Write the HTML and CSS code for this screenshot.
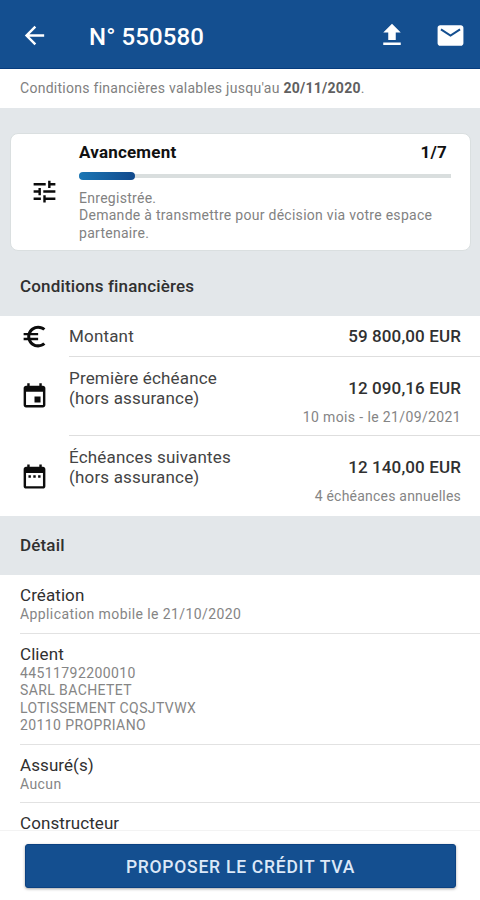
FILE: index.html
```html
<!DOCTYPE html>
<html lang="fr">
<head>
    <meta charset="UTF-8">
    <meta name="viewport" content="width=device-width, initial-scale=1.0">
    <title>N° 550580</title>
    <link rel="stylesheet" href="styles.css">
</head>
<body>
    <header class="app-bar">
        <svg class="icon icon-back" viewBox="0 0 24 24"><path d="M20 11H7.83l5.59-5.59L12 4l-8 8 8 8 1.41-1.41L7.83 13H20v-2z"/></svg>
        <h1 class="app-title">N° 550580</h1>
        <svg class="icon icon-upload" viewBox="0 0 24 24"><path d="M5 20h14v-2H5v2zm4-4h6v-6h4l-7-7-7 7h4v6z"/></svg>
        <svg class="icon icon-mail" viewBox="0 0 24 24"><path d="M20 4H4c-1.1 0-1.99.9-1.99 2L2 18c0 1.1.9 2 2 2h16c1.1 0 2-.9 2-2V6c0-1.1-.9-2-2-2z"/><path class="mail-flap" d="M4.6 7.3L12 12l7.4-4.7"/></svg>
    </header>

    <main class="content">
        <p class="notice">Conditions financières valables jusqu'au <strong>20/11/2020</strong>.</p>

        <section class="card">
            <svg class="icon" viewBox="0 0 24 24"><path d="M3 17v2h6v-2H3zM3 5v2h10V5H3zm10 16v-2h8v-2h-8v-2h-2v6h2zM7 9v2H3v2h4v2h2V9H7zm14 4v-2H11v2h10zm-6-4h2V7h4V5h-4V3h-2v6z"/></svg>
            <div class="card-body">
                <div class="card-head">
                    <span>Avancement</span>
                    <span class="card-step">1/7</span>
                </div>
                <div class="progress"><div class="progress-bar"></div></div>
                <p class="card-text">Enregistrée.<br>Demande à transmettre pour décision via votre espace partenaire.</p>
            </div>
        </section>

        <h2 class="section-title">Conditions financières</h2>
        <ul class="finance">
            <li class="finance-row row-amount">
                <svg class="icon" viewBox="0 0 24 24"><path d="M15 18.5c-2.51 0-4.68-1.42-5.76-3.5H15v-2H8.58c-.05-.33-.08-.66-.08-1s.03-.67.08-1H15V9H9.24C10.32 6.92 12.5 5.5 15 5.5c1.61 0 3.09.59 4.23 1.57L21 5.3C19.41 3.87 17.3 3 15 3c-3.92 0-7.24 2.51-8.48 6H3v2h3.06c-.04.33-.06.66-.06 1s.02.67.06 1H3v2h3.52c1.24 3.49 4.56 6 8.48 6 2.31 0 4.41-.87 6-2.3l-1.78-1.77c-1.13.98-2.6 1.57-4.22 1.57z"/></svg>
                <div class="finance-body">
                    <div class="finance-label">Montant</div>
                    <div class="finance-value">59 800,00 EUR</div>
                </div>
            </li>
            <li class="finance-row">
                <svg class="icon" viewBox="0 0 24 24"><path d="M17 12h-5v5h5v-5zM16 1v2H8V1H6v2H5c-1.11 0-1.99.9-1.99 2L3 19c0 1.1.89 2 2 2h14c1.1 0 2-.9 2-2V5c0-1.1-.9-2-2-2h-1V1h-2zm3 18H5V8h14v11z"/></svg>
                <div class="finance-body">
                    <div class="finance-label">Première échéance<br>(hors assurance)</div>
                    <div class="finance-value">12 090,16 EUR<small>10 mois - le 21/09/2021</small></div>
                </div>
            </li>
            <li class="finance-row">
                <svg class="icon" viewBox="0 0 24 24"><path d="M9 11H7v2h2v-2zm4 0h-2v2h2v-2zm4 0h-2v2h2v-2zm2-7h-1V2h-2v2H8V2H6v2H5c-1.11 0-1.99.9-1.99 2L3 20c0 1.1.89 2 2 2h14c1.1 0 2-.9 2-2V6c0-1.1-.9-2-2-2zm0 16H5V9h14v11z"/></svg>
                <div class="finance-body">
                    <div class="finance-label">Échéances suivantes<br>(hors assurance)</div>
                    <div class="finance-value">12 140,00 EUR<small class="term">4 échéances annuelles</small></div>
                </div>
            </li>
        </ul>

        <h2 class="section-title section-detail">Détail</h2>
        <dl class="details">
            <div class="detail">
                <dt>Création</dt>
                <dd>Application mobile le 21/10/2020</dd>
            </div>
            <div class="detail">
                <dt>Client</dt>
                <dd>44511792200010<br>SARL BACHETET<br>LOTISSEMENT CQSJTVWX<br>20110 PROPRIANO</dd>
            </div>
            <div class="detail">
                <dt>Assuré(s)</dt>
                <dd>Aucun</dd>
            </div>
            <div class="detail">
                <dt>Constructeur</dt>
            </div>
        </dl>
    </main>

    <footer class="footer">
        <button class="submit-btn" type="button">PROPOSER LE CRÉDIT TVA</button>
    </footer>
</body>
</html>
```

FILE: styles.css
```css
* {
    margin: 0;
    padding: 0;
    box-sizing: border-box;
}

body {
    font-family: Roboto, 'Liberation Sans', sans-serif;
    height: 100vh;
    display: flex;
    flex-direction: column;
    overflow: hidden;
    background: #e3e7ea;
    color: #303030;
}

.icon {
    width: 29px;
    height: 29px;
    flex: none;
    fill: #0c0c0c;
}

.app-bar {
    height: 69px;
    flex: none;
    display: flex;
    align-items: center;
    padding: 2px 14px 0 20px;
    background: #144f90;
    border-bottom: 1px solid #063c7e;
    color: #fff;
}

.app-bar .icon {
    fill: #fff;
}

.app-title {
    flex: 1;
    margin-left: 40px;
    padding-top: 4px;
    font-size: 24px;
    font-weight: 500;
    letter-spacing: 0.1px;
}

.app-bar .icon-upload {
    width: 30px;
    height: 30px;
}

.app-bar .icon-mail {
    width: 31px;
    height: 31px;
    margin-left: 28px;
}

.icon-mail .mail-flap {
    fill: none;
    stroke: #144f90;
    stroke-width: 1.6;
}

.content {
    flex: 1;
    min-height: 0;
    overflow: hidden;
}

.notice {
    height: 39px;
    padding-left: 20px;
    background: #fff;
    font-size: 14px;
    line-height: 39px;
    letter-spacing: 0.27px;
    color: #808080;
}

.notice strong {
    color: #606060;
}

.card {
    display: flex;
    align-items: center;
    height: 118px;
    margin: 25px 9px 0 10px;
    padding: 0 19px;
    background: #fff;
    border: 1px solid #dadfe0;
    border-radius: 8px;
}

.card .icon {
    margin-top: -2px;
}

.card-body {
    flex: 1;
    margin-left: 20px;
}

.card-head {
    display: flex;
    justify-content: space-between;
    font-size: 17px;
    line-height: 20px;
    font-weight: 700;
    letter-spacing: 0.2px;
    color: #111;
}

.card-step {
    padding-right: 4px;
}

.progress {
    display: flex;
    align-items: center;
    height: 8px;
    margin: 10px 0;
    background: linear-gradient(#d9dede, #d9dede) center / 100% 4px no-repeat;
}

.progress-bar {
    width: 15%;
    height: 8px;
    border-radius: 4px;
    background: linear-gradient(90deg, #1b77b5, #11498c);
}

.card-text {
    font-size: 14px;
    line-height: 17.3px;
    letter-spacing: 0.28px;
    color: #828282;
}

.section-title {
    height: 65px;
    padding: 5px 20px 0;
    font-size: 17px;
    line-height: 60px;
    font-weight: 500;
    letter-spacing: 0.16px;
}

.section-detail {
    height: 59px;
    padding-top: 0;
    line-height: 58px;
}

.finance {
    list-style: none;
    background: #fff;
}

.finance-row {
    display: flex;
    align-items: center;
    height: 79px;
    padding-left: 20px;
}

.finance-body {
    flex: 1;
    align-self: stretch;
    display: flex;
    justify-content: space-between;
    margin-left: 20px;
    padding: 11px 19px 0 0;
    border-bottom: 1px solid #dedede;
}

.finance-row:last-child {
    height: 80px;
}

.finance-row:last-child .finance-body {
    border-bottom: none;
}

.row-amount {
    height: 41px;
}

.row-amount .finance-body {
    padding-top: 10px;
}

.finance-label {
    font-size: 17px;
    line-height: 20px;
    letter-spacing: 0.17px;
    color: #444;
}

.finance-value {
    padding-top: 10px;
    font-size: 17px;
    line-height: 20px;
    font-weight: 500;
    letter-spacing: 0.12px;
    text-align: right;
}

.row-amount .finance-value {
    padding-top: 0;
}

.finance-value small {
    display: block;
    margin-top: 9px;
    font-size: 14px;
    font-weight: 400;
    letter-spacing: 0.37px;
    color: #858585;
}

.finance-value .term {
    letter-spacing: 0.22px;
}

.details {
    background: #fff;
}

.detail {
    margin-left: 20px;
    padding: 10px 0 9px;
    border-bottom: 1px solid #e2e2e2;
}

.detail:last-child {
    padding-bottom: 0;
    border-bottom: none;
}

.detail dt {
    font-size: 17px;
    line-height: 20px;
    letter-spacing: 0.08px;
}

.detail dd {
    font-size: 14px;
    line-height: 17.5px;
    letter-spacing: 0.4px;
    padding-top: 1px;
    color: #858585;
}

.footer {
    height: 70px;
    flex: none;
    padding: 13px 24px 12px 25px;
    background: #fff;
    border-top: 1px solid #f3f3f3;
}

.submit-btn {
    display: block;
    width: 100%;
    height: 44px;
    padding-top: 1px;
    border: 1px solid #0b4181;
    border-radius: 3px;
    background: #144f90;
    box-shadow: 0 1px 3px rgba(0,0,0,0.35);
    font: 500 17.5px Roboto, 'Liberation Sans', sans-serif;
    letter-spacing: 0.75px;
    color: #dce8f8;
}
```
